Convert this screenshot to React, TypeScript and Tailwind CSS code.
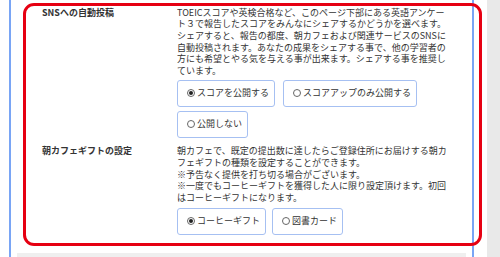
import React from "react";

function Radio({ checked, label }: { checked?: boolean; label: string }) {
  return (
    <div className="inline-flex items-center h-[27px] pl-[9px] pr-[5px] border border-[#a6c0f2] rounded-[3px] bg-white">
      <span className="w-[8px] h-[8px] rounded-full border border-[#666] bg-white flex items-center justify-center shrink-0">
        {checked && <span className="w-[4px] h-[4px] rounded-full bg-[#222]" />}
      </span>
      <span className="ml-[2px] whitespace-nowrap">{label}</span>
    </div>
  );
}

function Lines({ lines }: { lines: string[] }) {
  return (
    <div>
      {lines.map((l, i) => (
        <div key={i} className="whitespace-nowrap">
          {l}
        </div>
      ))}
    </div>
  );
}

export default function App() {
  return (
    <div className="relative w-[500px] h-[257px] bg-white overflow-hidden flex text-[9px] leading-[11.7px] text-[#333] font-['Noto_Sans_CJK_JP',sans-serif]">
      <div className="w-[487px] pl-[9px]">
        <div className="w-[465px] h-full border-x-2 border-[#79a5f5] flex flex-col">
          <div className="flex pt-[6.5px]">
            <div className="w-[166px] pl-[31px] font-bold">SNSへの自動投稿</div>
            <div className="w-[280px]">
              <Lines
                lines={[
                  "TOEICスコアや英検合格など、このページ下部にある英語アンケー",
                  "ト３で報告したスコアをみんなにシェアするかどうかを選べます。",
                  "シェアすると、報告の都度、朝カフェおよび関連サービスのSNSに",
                  "自動投稿されます。あなたの成果をシェアする事で、他の学習者の",
                  "方にも希望とやる気を与える事が出来ます。シェアする事を推奨し",
                  "ています。",
                ]}
              />
              <div className="mt-[3px] flex flex-wrap gap-x-[8px] gap-y-[4px]">
                <Radio checked label="スコアを公開する" />
                <Radio label="スコアアップのみ公開する" />
                <Radio label="公開しない" />
              </div>
            </div>
          </div>
          <div className="flex pt-[7.5px]">
            <div className="w-[166px] pl-[31px] font-bold">朝カフェギフトの設定</div>
            <div className="w-[280px]">
              <Lines
                lines={[
                  "朝カフェで、既定の提出数に達したらご登録住所にお届けする朝カ",
                  "フェギフトの種類を設定することができます。",
                  "※予告なく提供を打ち切る場合がございます。",
                  "※一度でもコーヒーギフトを獲得した人に限り設定頂けます。初回",
                  "はコーヒーギフトになります。",
                ]}
              />
              <div className="mt-[4px] flex flex-wrap gap-x-[6px] gap-y-[4px]">
                <Radio checked label="コーヒーギフト" />
                <Radio label="図書カード" />
              </div>
            </div>
          </div>
          <div className="mt-auto mx-[6px] h-[4px] bg-[#efefef]" />
        </div>
      </div>
      <div className="flex-1 bg-[#e9e9e9]" />
      <div className="absolute left-[23px] top-[3px] w-[459px] h-[243px] border-[3px] border-[#e60012] rounded-[11px] pointer-events-none" />
    </div>
  );
}
